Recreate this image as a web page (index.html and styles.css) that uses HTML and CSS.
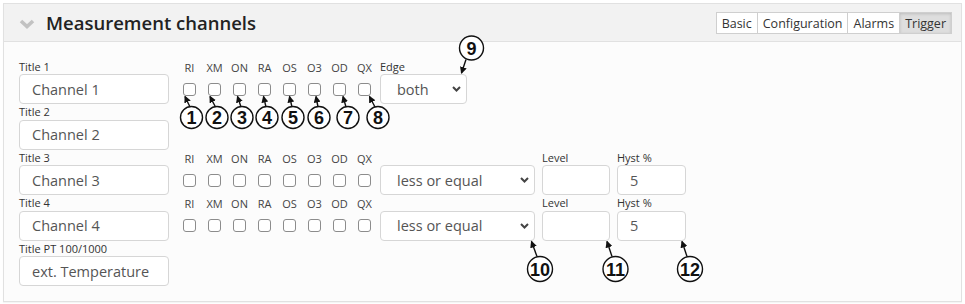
FILE: index.html
```html
<!DOCTYPE html>
<html lang="en">
  <head>
    <meta charset="UTF-8" />
    <meta name="viewport" content="width=device-width, initial-scale=1.0" />
    <title>Measurement channels</title>
    <link rel="stylesheet" href="styles.css">
  </head>
  <body>
    <div class="panel">
      <div class="panel-head">
        <svg class="chevron" width="16" height="10" viewBox="0 0 16 10">
          <polyline points="2,2 8,7.5 14,2" fill="none" stroke="#c2c2c2" stroke-width="3.6" />
        </svg>
        <h2 class="panel-title">Measurement channels</h2>
        <div class="tabs">
          <button class="tab">Basic</button>
          <button class="tab">Configuration</button>
          <button class="tab">Alarms</button>
          <button class="tab active">Trigger</button>
        </div>
      </div>

      <div class="panel-body">
        <div class="row">
          <label class="field"><span class="lbl">Title 1</span><input class="text title" value="Channel 1"></label>
          <div class="flags">
            <label class="flag"><span class="flag-lbl">RI</span><input type="checkbox"></label>
            <label class="flag"><span class="flag-lbl">XM</span><input type="checkbox"></label>
            <label class="flag"><span class="flag-lbl">ON</span><input type="checkbox"></label>
            <label class="flag"><span class="flag-lbl">RA</span><input type="checkbox"></label>
            <label class="flag"><span class="flag-lbl">OS</span><input type="checkbox"></label>
            <label class="flag"><span class="flag-lbl">O3</span><input type="checkbox"></label>
            <label class="flag"><span class="flag-lbl">OD</span><input type="checkbox"></label>
            <label class="flag"><span class="flag-lbl">QX</span><input type="checkbox"></label>
          </div>
          <label class="field">
            <span class="lbl">Edge</span>
            <span class="sel-wrap">
              <select class="sel edge"><option>both</option></select>
              <svg class="sel-arrow" width="9" height="6" viewBox="0 0 9 6"><polyline points="1,1 4.5,4.5 8,1" fill="none" stroke="#444" stroke-width="2" /></svg>
            </span>
          </label>
        </div>

        <div class="row">
          <label class="field"><span class="lbl">Title 2</span><input class="text title" value="Channel 2"></label>
        </div>

        <div class="row">
          <label class="field"><span class="lbl">Title 3</span><input class="text title" value="Channel 3"></label>
          <div class="flags">
            <label class="flag"><span class="flag-lbl">RI</span><input type="checkbox"></label>
            <label class="flag"><span class="flag-lbl">XM</span><input type="checkbox"></label>
            <label class="flag"><span class="flag-lbl">ON</span><input type="checkbox"></label>
            <label class="flag"><span class="flag-lbl">RA</span><input type="checkbox"></label>
            <label class="flag"><span class="flag-lbl">OS</span><input type="checkbox"></label>
            <label class="flag"><span class="flag-lbl">O3</span><input type="checkbox"></label>
            <label class="flag"><span class="flag-lbl">OD</span><input type="checkbox"></label>
            <label class="flag"><span class="flag-lbl">QX</span><input type="checkbox"></label>
          </div>
          <label class="field">
            <span class="lbl">&nbsp;</span>
            <span class="sel-wrap">
              <select class="sel cmp"><option>less or equal</option></select>
              <svg class="sel-arrow" width="9" height="6" viewBox="0 0 9 6"><polyline points="1,1 4.5,4.5 8,1" fill="none" stroke="#444" stroke-width="2" /></svg>
            </span>
          </label>
          <label class="field gap"><span class="lbl">Level</span><input class="text level" value=""></label>
          <label class="field gap"><span class="lbl">Hyst %</span><input class="text hyst" value="5"></label>
        </div>

        <div class="row">
          <label class="field"><span class="lbl">Title 4</span><input class="text title" value="Channel 4"></label>
          <div class="flags">
            <label class="flag"><span class="flag-lbl">RI</span><input type="checkbox"></label>
            <label class="flag"><span class="flag-lbl">XM</span><input type="checkbox"></label>
            <label class="flag"><span class="flag-lbl">ON</span><input type="checkbox"></label>
            <label class="flag"><span class="flag-lbl">RA</span><input type="checkbox"></label>
            <label class="flag"><span class="flag-lbl">OS</span><input type="checkbox"></label>
            <label class="flag"><span class="flag-lbl">O3</span><input type="checkbox"></label>
            <label class="flag"><span class="flag-lbl">OD</span><input type="checkbox"></label>
            <label class="flag"><span class="flag-lbl">QX</span><input type="checkbox"></label>
          </div>
          <label class="field">
            <span class="lbl">&nbsp;</span>
            <span class="sel-wrap">
              <select class="sel cmp"><option>less or equal</option></select>
              <svg class="sel-arrow" width="9" height="6" viewBox="0 0 9 6"><polyline points="1,1 4.5,4.5 8,1" fill="none" stroke="#444" stroke-width="2" /></svg>
            </span>
          </label>
          <label class="field gap"><span class="lbl">Level</span><input class="text level" value=""></label>
          <label class="field gap"><span class="lbl">Hyst %</span><input class="text hyst" value="5"></label>
        </div>

        <div class="row">
          <label class="field"><span class="lbl">Title PT 100/1000</span><input class="text title" value="ext. Temperature"></label>
        </div>
      </div>
    </div>

    <!-- numbered callouts drawn over the form -->
    <svg class="notes" width="965" height="304" viewBox="0 0 965 304">
      <defs>
        <marker id="tip" markerUnits="userSpaceOnUse" markerWidth="7" markerHeight="7" refX="6" refY="3.5" orient="auto">
          <path d="M0,0 L7,3.5 L0,7 z" fill="#111" />
        </marker>
      </defs>
      <g stroke="#111" stroke-width="1.4" marker-end="url(#tip)">
        <line x1="190" y1="107" x2="185" y2="96.5" />
        <line x1="215.5" y1="107" x2="210" y2="96.5" />
        <line x1="241" y1="107" x2="237.5" y2="96.5" />
        <line x1="266" y1="107" x2="263.5" y2="96.5" />
        <line x1="292" y1="107" x2="289.5" y2="96.5" />
        <line x1="318" y1="107" x2="316" y2="96.5" />
        <line x1="346" y1="107" x2="343" y2="96.5" />
        <line x1="375" y1="107" x2="369.5" y2="96.5" />
        <line x1="466" y1="59.5" x2="461.5" y2="73" />
        <line x1="537" y1="256.5" x2="531.5" y2="241.5" />
        <line x1="612" y1="256.5" x2="607" y2="241.5" />
        <line x1="687" y1="256.5" x2="682" y2="241.5" />
      </g>
      <g fill="#fff" stroke="#111" stroke-width="1.4">
        <circle cx="191.5" cy="117.5" r="11" />
        <circle cx="217" cy="117.5" r="11" />
        <circle cx="242" cy="117.5" r="11" />
        <circle cx="267" cy="117.5" r="11" />
        <circle cx="293" cy="117.5" r="11" />
        <circle cx="319" cy="117.5" r="11" />
        <circle cx="348" cy="117.5" r="11" />
        <circle cx="378" cy="117.5" r="11" />
        <circle cx="471.5" cy="48" r="12" />
        <circle cx="540" cy="269" r="12.5" />
        <circle cx="615.5" cy="269" r="12.5" />
        <circle cx="690" cy="269" r="12.5" />
      </g>
      <g class="note-num" text-anchor="middle">
        <text x="191.5" y="124">1</text>
        <text x="217" y="124">2</text>
        <text x="242" y="124">3</text>
        <text x="267" y="124">4</text>
        <text x="293" y="124">5</text>
        <text x="319" y="124">6</text>
        <text x="348" y="124">7</text>
        <text x="378" y="124">8</text>
        <text x="471.5" y="54.5">9</text>
        <text x="540" y="275.5">10</text>
        <text x="615.5" y="275.5">11</text>
        <text x="690" y="275.5">12</text>
      </g>
    </svg>
  </body>
</html>
```

FILE: styles.css
```css
body {
  margin: 0;
  padding: 3px;
  background-color: #fff;
  font-family: "Open Sans", "Liberation Sans", sans-serif;
  color: #333;
}

.panel {
  border: 1px solid #e1e1e1;
  background-color: #fcfcfc;
  box-shadow: 0 1px 1px rgba(0, 0, 0, 0.04);
}

.panel-head {
  display: flex;
  align-items: center;
  height: 37px;
  padding: 0 9px 0 15px;
  background-color: #f2f2f2;
  border-bottom: 1px solid #e1e1e1;
}

.chevron {
  display: block;
  margin-top: 2px;
}

.panel-title {
  margin: 0 0 0 11px;
  font-size: 18.5px;
  font-weight: 600;
  color: #222;
  flex: 1;
}

.tabs {
  display: flex;
  margin-top: 1px;
}

.tab {
  height: 22px;
  padding: 0 5px;
  margin-left: -1px;
  border: 1px solid #cfcfcf;
  background-color: #fff;
  font-family: "Open Sans", "Liberation Sans", sans-serif;
  font-size: 12.5px;
  color: #333;
}

.tab.active {
  background-color: #dedede;
  box-shadow: inset 0 1px 3px rgba(0, 0, 0, 0.15);
}

.panel-body {
  padding: 16.5px 15px 15px 15px;
}

.row {
  display: flex;
  height: 45.5px;
}

.field {
  display: flex;
  flex-direction: column;
}

.field.gap {
  margin-left: 7px;
}

.lbl {
  height: 15.5px;
  line-height: 15.5px;
  font-size: 11px;
  color: #333;
  white-space: nowrap;
}

.text,
.sel {
  box-sizing: border-box;
  height: 30px;
  border: 1px solid #d6d6d6;
  border-radius: 4px;
  background-color: #fff;
  padding: 0 12px;
  font-family: "Open Sans", "Liberation Sans", sans-serif;
  font-size: 14.5px;
  color: #555;
  outline: none;
}

.title {
  width: 150px;
}

.level {
  width: 68px;
}

.hyst {
  width: 69px;
}

.flags {
  display: flex;
  margin-left: 8px;
  margin-right: 3px;
}

.flag {
  display: flex;
  flex-direction: column;
  align-items: center;
  width: 25px;
}

.flag-lbl {
  height: 15.5px;
  padding-top: 3px;
  box-sizing: border-box;
  line-height: 12.5px;
  font-size: 11px;
  color: #444;
  white-space: nowrap;
}

.flag input {
  appearance: none;
  width: 13px;
  height: 13px;
  margin: 8.5px 0 0 0;
  border: 1px solid #8c8c8c;
  border-radius: 3px;
  background-color: #fff;
}

.sel-wrap {
  position: relative;
  display: block;
}

.sel {
  appearance: none;
  padding-left: 16px;
}

.sel.edge {
  width: 87px;
}

.sel.cmp {
  width: 155px;
}

.sel-arrow {
  position: absolute;
  right: 6px;
  top: 12px;
  pointer-events: none;
}

.notes {
  position: absolute;
  top: 0;
  left: 0;
  pointer-events: none;
}

.note-num {
  font-family: "Liberation Sans", Arial, sans-serif;
  font-weight: bold;
  font-size: 18px;
  fill: #111;
}
```
